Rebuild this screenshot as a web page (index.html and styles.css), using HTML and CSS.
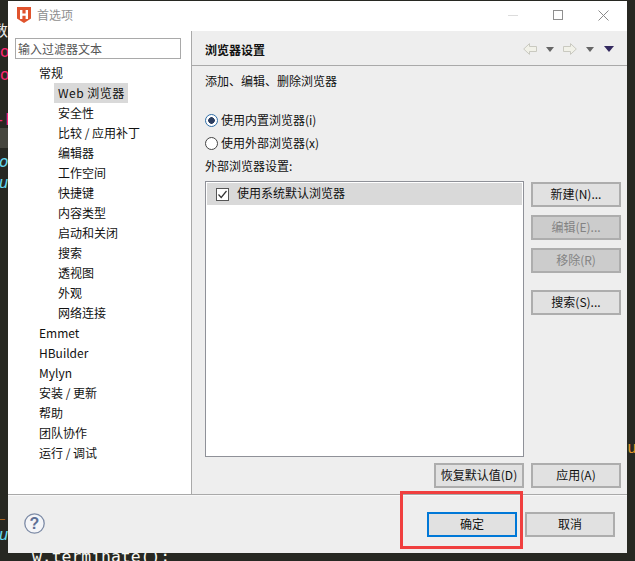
FILE: index.html
```html
<!DOCTYPE html>
<html lang="zh">
<head>
<meta charset="utf-8">
<title>首选项</title>
<link rel="stylesheet" href="styles.css">
</head>
<body>
<div class="code" aria-hidden="true">
  <div class="hl-line"></div>
  <span class="frag f-num">数</span>
  <span class="frag f-to1">to</span>
  <span class="frag f-to2">to</span>
  <span class="frag f-p">-F</span>
  <span class="frag f-c1">Fo</span>
  <span class="frag f-c2">Fu</span>
  <span class="frag f-o">_</span>
  <span class="frag f-c3">Fu</span>
  <span class="frag f-term">w.terminate();</span>
  <span class="frag f-r">ur</span>
</div>

<div class="window">
  <header class="titlebar">
    <svg class="logo" width="14" height="16" viewBox="0 0 14 16"><path d="M0 0h14v11.500L7 16 0 11.500z" fill="#e0532d"/><path d="M3 3h2.400v3.400h3.200V3H11v9H8.600V8.700H5.400V12H3z" fill="#fff"/></svg>
    <span class="title">首选项</span>
    <div class="win-controls">
      <span class="win-min"></span>
      <span class="win-max"></span>
      <svg class="win-close" width="11" height="11" viewBox="0 0 11 11"><path d="M.5.500l10 10M10.500.500l-10 10" stroke="#8a8a8a" fill="none"/></svg>
    </div>
  </header>

  <div class="main">
    <aside class="sidebar">
      <input class="filter" type="text" placeholder="输入过滤器文本">
      <ul class="tree">
        <li class="lvl1">常规</li>
        <li class="lvl2"><span class="selected">Web 浏览器</span></li>
        <li class="lvl2">安全性</li>
        <li class="lvl2">比较 / 应用补丁</li>
        <li class="lvl2">编辑器</li>
        <li class="lvl2">工作空间</li>
        <li class="lvl2">快捷键</li>
        <li class="lvl2">内容类型</li>
        <li class="lvl2">启动和关闭</li>
        <li class="lvl2">搜索</li>
        <li class="lvl2">透视图</li>
        <li class="lvl2">外观</li>
        <li class="lvl2">网络连接</li>
        <li class="lvl1">Emmet</li>
        <li class="lvl1">HBuilder</li>
        <li class="lvl1">Mylyn</li>
        <li class="lvl1">安装 / 更新</li>
        <li class="lvl1">帮助</li>
        <li class="lvl1">团队协作</li>
        <li class="lvl1">运行 / 调试</li>
      </ul>
    </aside>

    <section class="content">
      <div class="content-head">
        <h1 class="content-title">浏览器设置</h1>
        <div class="nav-icons">
          <svg width="14" height="12" viewBox="0 0 14 12"><path d="M.7 6 6.500.600V3.500h7v5h-7v2.900z" fill="#f1f1e8" stroke="#c9c9c0"/></svg>
          <span class="tri tri-grey"></span>
          <svg class="nav-fwd" width="14" height="12" viewBox="0 0 14 12"><path d="M13.300 6 7.500.600V3.500h-7v5h7v2.900z" fill="#f1f1e8" stroke="#c9c9c0"/></svg>
          <span class="tri tri-grey"></span>
          <span class="tri tri-navy"></span>
        </div>
      </div>

      <div class="content-body">
        <p class="desc">添加、编辑、删除浏览器</p>

        <div class="radios">
          <label class="radio-row"><span class="radio radio-on"></span>使用内置浏览器(i)</label>
          <label class="radio-row"><span class="radio"></span>使用外部浏览器(x)</label>
        </div>

        <p class="list-label">外部浏览器设置:</p>

        <div class="list-area">
          <div class="list">
            <div class="list-row">
              <svg class="check" width="13" height="13" viewBox="0 0 13 13"><rect x=".5" y=".5" width="12" height="12" fill="#fff" stroke="#555"/><path d="M2.500 6.500 5.200 9.500 10.500 3" fill="none" stroke="#333" stroke-width="1.200"/></svg>
              <span class="row-text">使用系统默认浏览器</span>
            </div>
          </div>
          <div class="list-buttons">
            <button class="btn">新建(N)...</button>
            <button class="btn" disabled>编辑(E)...</button>
            <button class="btn" disabled>移除(R)</button>
            <button class="btn btn-search">搜索(S)...</button>
          </div>
        </div>

        <div class="apply-row">
          <button class="btn">恢复默认值(D)</button>
          <button class="btn">应用(A)</button>
        </div>
      </div>
    </section>
  </div>

  <footer class="footer">
    <svg class="help" width="21" height="21" viewBox="0 0 21 21"><circle cx="10.500" cy="10.500" r="9.700" fill="#f4f5f8" stroke="#7d8ba6" stroke-width="1.300"/><text x="10.500" y="16" text-anchor="middle" class="help-q">?</text></svg>
    <div class="footer-buttons">
      <button class="btn btn-default">确定</button>
      <button class="btn">取消</button>
    </div>
  </footer>
</div>

<div class="annotation"></div>
</body>
</html>
```

FILE: styles.css
```css
* { box-sizing: border-box; }

html, body {
  margin: 0;
  height: 100%;
}

body {
  position: relative;
  width: 635px;
  height: 561px;
  overflow: hidden;
  background: #272822;
  font: 12px/20px "Noto Sans CJK SC", "Noto Sans", sans-serif;
  color: #111;
}

/* Editor behind the dialog */
.code {
  position: absolute;
  inset: 0;
  font-family: "DejaVu Sans Mono", monospace;
  font-size: 16.400px;
  line-height: 20px;
}
.hl-line { position: absolute; left: 0; top: 128px; width: 8px; height: 20px; background: #46463e; }
.frag { position: absolute; white-space: nowrap; }
.f-num { left: -7px; top: 20px; color: #eee; font-family: "Noto Sans CJK SC", sans-serif; font-size: 15px; }
.f-to1 { left: -10px; top: 42px; color: #f92672; }
.f-to2 { left: -10px; top: 65px; color: #f92672; }
.f-p   { left: -5px; top: 110px; color: #f92672; }
.f-c1  { left: -11px; top: 152px; color: #66d9ef; font-style: italic; }
.f-c2  { left: -11px; top: 173px; color: #66d9ef; font-style: italic; }
.f-o   { left: -5px; top: 501px; color: #fd971f; }
.f-c3  { left: -11px; top: 525px; color: #66d9ef; font-style: italic; }
.f-term { left: 32px; top: 547px; color: #f8f8f2; }
.f-r   { left: 627px; top: 438px; color: #e0952c; }

/* Dialog */
.window {
  position: absolute;
  left: 8px;
  top: 1px;
  width: 619px;
  height: 552px;
  display: flex;
  flex-direction: column;
  background: #eee;
}

.titlebar {
  flex: none;
  height: 30px;
  display: flex;
  align-items: center;
  padding: 0 0 2px 9px;
  background: #fff;
}
.logo { margin-right: 6px; }
.title { color: #8f8f8f; }
.win-controls {
  margin-left: auto;
  display: flex;
  align-items: center;
  padding-right: 18px;
  gap: 35px;
}
.win-min { width: 10px; height: 1px; background: #dcdcdc; }
.win-max { width: 10px; height: 10px; border: 1px solid #8f8f8f; }
.win-close { display: block; }

.main {
  flex: 1;
  min-height: 0;
  display: flex;
}

.sidebar {
  flex: none;
  width: 184px;
  padding: 7px 0 0 7px;
  background: #fff;
  border-right: 1px solid #a9a9a9;
}
.filter {
  display: block;
  width: 166px;
  height: 21px;
  padding: 0 2px;
  border: 1px solid #a9a9a9;
  border-radius: 0;
  outline: none;
  background: #fff;
  font: inherit;
}
.filter::placeholder { color: #555; opacity: 1; }

.tree {
  list-style: none;
  margin: 4px 0 0;
  padding: 0;
}
.tree li { height: 20px; line-height: 20px; white-space: nowrap; }
.lvl1 { padding-left: 24px; }
.lvl2 { padding-left: 43px; }
.selected {
  display: inline-block;
  height: 20px;
  margin-left: -4px;
  padding: 0 3px 0 4px;
  background: #d9d9d9;
  letter-spacing: .5px;
}

.content {
  flex: 1;
  min-width: 0;
  display: flex;
  flex-direction: column;
}
.content-head {
  flex: none;
  height: 35px;
  padding: 3px 13px 0 13px;
  display: flex;
  align-items: center;
  justify-content: space-between;
  border-bottom: 1px solid #a9a9a9;
}
.content-title {
  margin: 0;
  font-size: 12px;
  font-weight: 700;
  color: #111;
}
.nav-icons { display: flex; align-items: center; margin-top: -1px; }
.nav-icons svg { display: block; }
.nav-fwd { margin-left: 9px; }
.tri {
  width: 0;
  height: 0;
  margin-left: 9px;
  border-left: 4px solid transparent;
  border-right: 4px solid transparent;
  border-top: 5px solid #666;
}
.tri-navy {
  margin-left: 10px;
  border-left-width: 5px;
  border-right-width: 5px;
  border-top: 6px solid #33295f;
}

.content-body {
  flex: 1;
  min-height: 0;
  padding: 5px 6px 0 13px;
  display: flex;
  flex-direction: column;
}
.desc, .list-label { margin: 0; }

.radios {
  margin-top: 19px;
  display: flex;
  flex-direction: column;
  gap: 3px;
}
.radio-row {
  display: flex;
  align-items: center;
  height: 20px;
  gap: 3px;
}
.radio {
  width: 13px;
  height: 13px;
  flex: none;
  border: 1px solid #444;
  border-radius: 50%;
  background: #fff;
}
.radio-on {
  border-color: #2f6ea8;
  background: radial-gradient(circle, #2c3e60 0 3px, #fff 3.600px);
}

.list-label { margin-top: 3px; }

.list-area {
  margin-top: 5px;
  flex: none;
  display: flex;
  gap: 7px;
  height: 276px;
}
.list {
  width: 319px;
  padding: 1px;
  border: 1px solid #8f9198;
  background: #fff;
}
.list-row {
  height: 22px;
  padding-left: 9px;
  display: flex;
  align-items: center;
  gap: 8px;
  background: #d9d9d9;
}
.row-text { margin-bottom: 2px; }
.check { flex: none; display: block; }

.list-buttons {
  width: 90px;
  padding-top: 1px;
  display: flex;
  flex-direction: column;
  gap: 8px;
}
.btn-search { margin-top: 9px; }

.btn {
  width: 90px;
  height: 25px;
  padding: 0 0 2px;
  border: 2px solid #adadad;
  border-radius: 0;
  background: #e1e1e1;
  font: inherit;
  line-height: 19px;
  color: #111;
}
.btn:disabled {
  background: #cccccc;
  color: #838383;
}
.btn-default { border-color: #0078d7; }

.apply-row {
  margin-top: 6px;
  display: flex;
  gap: 7px;
  padding-left: 229px;
}

.footer {
  flex: none;
  height: 59px;
  display: flex;
  align-items: center;
  justify-content: space-between;
  padding: 1px 12px 0 16px;
  border-top: 1px solid #a9a9a9;
  box-shadow: inset 0 1px #f8f8f8;
}
.help { display: block; margin-bottom: 3px; }
.help-q { font: 700 16px "Liberation Sans", sans-serif; fill: #5f7096; }
.footer-buttons { display: flex; gap: 8px; }

/* Red marker drawn over the screenshot */
.annotation {
  position: absolute;
  left: 400px;
  top: 491px;
  width: 123px;
  height: 58px;
  border: 3px solid #f03f3f;
}
```
